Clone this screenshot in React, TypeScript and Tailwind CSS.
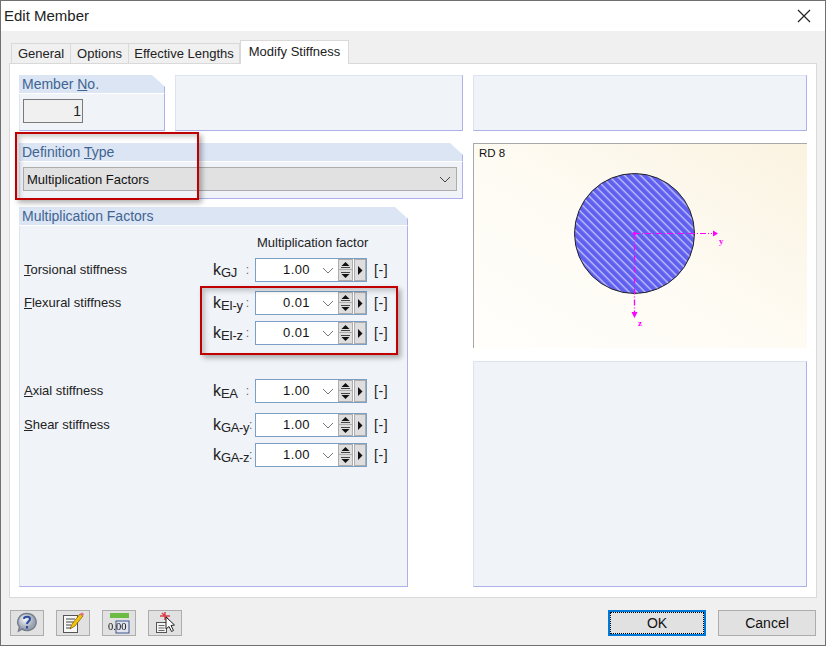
import React from "react";

function Panel({ title, className, children }: { title?: React.ReactNode; className: string; children?: React.ReactNode }) {
  return (
    <div className={`flex flex-col ${className}`}>
      {title && (
        <div className="h-[19px] shrink-0 border-b border-b-white border-r border-r-[#adb0ea] bg-[#dbe5f4] pl-[3px] text-[14px] leading-[18px] text-[#3f6491] [clip-path:polygon(0_0,calc(100%-13px)_0,100%_12px,100%_100%,0_100%)]">
          {title}
        </div>
      )}
      <div className={`min-h-0 flex-1 border-b border-l border-r border-b-[#adb0ea] border-l-[#dde4f1] border-r-[#adb0ea] bg-[#f0f3f8] ${title ? "" : "border-t border-t-[#dde4f1]"}`}>
        {children}
      </div>
    </div>
  );
}

function Tri({ down }: { down?: boolean }) {
  return (
    <svg width="9" height="6" viewBox="0 0 9 6" className="block">
      {down ? (
        <>
          <rect x="0" y="0" width="9" height="1" fill="#444" />
          <path d="M0.500 2h8L4.500 6z" fill="#111" />
        </>
      ) : (
        <>
          <path d="M4.500 0l4 4h-8z" fill="#111" />
          <rect x="0" y="5" width="9" height="1" fill="#444" />
        </>
      )}
    </svg>
  );
}

function Field({ value }: { value: string }) {
  return (
    <div className="flex h-6 w-[112px] items-stretch border border-[#7c9dc4] bg-white">
      <div className="flex w-[81px] items-center justify-end">
        <span className="text-[13px] tracking-[0.4px] text-[#111]">{value}</span>
        <svg width="12" height="7" viewBox="0 0 12 7" className="ml-[12px] mr-[3px]">
          <path d="M1 1l5 5 5-5" fill="none" stroke="#777" strokeWidth="1" />
        </svg>
      </div>
      <div className="ml-[1px] flex w-[15px] flex-col">
        <div className="flex h-[11px] items-center justify-center border border-[#adadad] bg-[#dedede]"><Tri /></div>
        <div className="flex h-[11px] items-center justify-center border border-t-0 border-[#adadad] bg-[#dedede]"><Tri down /></div>
      </div>
      <div className="ml-[1px] flex h-[22px] w-[12px] items-center justify-center border border-[#adadad] bg-[#dedede]">
        <svg width="6" height="9" viewBox="0 0 6 9"><path d="M1 0l4.500 4.500L1 9z" fill="#111" /></svg>
      </div>
    </div>
  );
}

function Row({ label, sub, value, mt }: { label?: React.ReactNode; sub: string; value: string; mt: string }) {
  return (
    <div className={`flex h-6 items-center ${mt}`}>
      <div className="w-[193px] pl-[4px] text-[13px] text-[#222]">{label}</div>
      <div className="flex w-[42px] items-center whitespace-nowrap text-[#222]">
        <span className="text-[16px] leading-none">k</span>
        <span className="relative top-[2px] text-[13px] leading-none tracking-[-0.4px]">{sub}</span>
        <span className="ml-auto mr-[6px] text-[12px] text-[#666]">:</span>
      </div>
      <Field value={value} />
      <span className="ml-[7px] text-[14px] tracking-[0.6px] text-[#222]">[-]</span>
    </div>
  );
}

function Toolbtn({ children }: { children: React.ReactNode }) {
  return (
    <div className="flex h-[26px] w-[34px] items-center justify-center border border-[#adadad] bg-[#e1e1e1]">{children}</div>
  );
}

export default function App() {
  return (
    <div className="relative flex h-[646px] w-[826px] flex-col overflow-hidden border border-[#707070] bg-[#f0f0f0] text-[13px] [font-family:'Liberation_Sans',Arial,sans-serif]">
      <div className="flex h-[30px] shrink-0 items-center justify-between bg-white pl-[3px] pr-[14px]">
        <span className="text-[15px] text-[#222]">Edit Member</span>
        <svg width="14" height="14" viewBox="0 0 14 14"><path d="M1 1l12 12M13 1L1 13" stroke="#222" strokeWidth="1.2" /></svg>
      </div>

      <div className="flex h-[32px] shrink-0 items-end pl-[10px] text-[#222]">
        <div className="flex h-[20px] w-[60px] items-center justify-center border border-b-0 border-[#d9d9d9] bg-[#f0f0f0]">General</div>
        <div className="flex h-[20px] w-[58px] items-center justify-center border border-b-0 border-l-0 border-[#d9d9d9] bg-[#f0f0f0]">Options</div>
        <div className="flex h-[20px] w-[111px] items-center justify-center border border-b-0 border-l-0 border-[#d9d9d9] bg-[#f0f0f0]">Effective Lengths</div>
        <div className="z-10 -mb-px flex h-[24px] w-[109px] items-start justify-center border border-b-0 border-[#d9d9d9] bg-white pt-[1px]">Modify Stiffness</div>
      </div>

      <div className="mx-[8px] flex h-[535px] shrink-0 gap-[10px] border border-[#d9d9d9] bg-white pl-[9px] pr-[7px] pt-[11px]">
        <div className="flex w-[444px] shrink-0 flex-col">
          <div className="flex h-[56px] gap-[10px]">
            <Panel className="w-[146px]" title={<>Member <u>N</u>o.</>}>
              <div className="ml-[3px] mt-[5px] flex h-[24px] w-[60px] items-center justify-end border border-[#7a7a7a] bg-[#f0f0f0] pr-[1px] pt-[1px] text-[14px] text-[#222]">1</div>
            </Panel>
            <Panel className="w-[288px]" />
          </div>
          <Panel className="mt-[12px] h-[56px]" title={<>Definition <u>T</u>ype</>}>
            <div className="ml-[3px] mt-[5px] flex h-[24px] w-[434px] items-center justify-between border border-[#adadad] bg-[#e1e1e1] pl-[3px] pr-[5px] pt-[1px] text-[#111]">
              <span>Multiplication Factors</span>
              <svg width="12" height="7" viewBox="0 0 12 7"><path d="M1 1l5 5 5-5" fill="none" stroke="#444" /></svg>
            </div>
          </Panel>
          <Panel className="mt-[8px] h-[380px] w-[389px]" title="Multiplication Factors">
            <div className="flex h-full flex-col">
              <div className="mt-[8px] h-[17px] pl-[237px] text-[13px] leading-[17px] text-[#222]">Multiplication factor</div>
              <Row mt="mt-[7px]" label={<><u>T</u>orsional stiffness</>} sub="GJ" value="1.00" />
              <Row mt="mt-[9px]" label={<><u>F</u>lexural stiffness</>} sub="EI-y" value="0.01" />
              <Row mt="mt-[6px]" sub="EI-z" value="0.01" />
              <Row mt="mt-[34px]" label={<><u>A</u>xial stiffness</>} sub="EA" value="1.00" />
              <Row mt="mt-[10px]" label={<><u>S</u>hear stiffness</>} sub="GA-y" value="1.00" />
              <Row mt="mt-[6px]" sub="GA-z" value="1.00" />
            </div>
          </Panel>
        </div>

        <div className="flex w-[334px] shrink-0 flex-col">
          <Panel className="h-[56px]" />
          <div className="relative mt-[12px] h-[205px] border-l border-t border-[#a8a8a8] bg-gradient-to-tr from-[#fffefb] via-[#fefbf3] to-[#fbf3e1]">
            <span className="absolute left-[5px] top-[1px] text-[11.500px] text-[#111]">RD 8</span>
            <svg width="333" height="204" viewBox="0 0 333 204" className="block">
              <defs>
                <pattern id="h" width="5.660" height="5.660" patternUnits="userSpaceOnUse" patternTransform="rotate(45)">
                  <rect width="5.660" height="5.660" fill="#6060f0" />
                  <rect width="5.660" height="1.300" fill="#c6c6fa" />
                </pattern>
              </defs>
              <circle cx="160.500" cy="89.500" r="60" fill="url(#h)" stroke="#222" strokeWidth="1" />
              <g stroke="#ff00ff" fill="none">
                <path d="M160 89.500H238" strokeWidth="1.200" strokeDasharray="6 2 1 2" />
                <path d="M160.500 89.500V168" strokeWidth="1.300" strokeDasharray="6 2 1 2" />
              </g>
              <circle cx="160.500" cy="89.500" r="1.800" fill="#ff00ff" />
              <path d="M239 86.500l5 3-5 3zM157.500 168h6l-3 6z" fill="#ff00ff" />
              <text x="245" y="100" fontSize="9" fontWeight="700" fill="#ff00ff" fontFamily="'Liberation Serif', serif">y</text>
              <text x="164" y="182" fontSize="9" fontWeight="700" fill="#ff00ff" fontFamily="'Liberation Serif', serif">z</text>
            </svg>
          </div>
          <Panel className="mt-[13px] h-[226px]" />
        </div>
      </div>

      <div className="flex flex-1 items-start px-[9px] pt-[12px]">
        <div className="flex gap-[12px]">
          <Toolbtn>
            <svg width="24" height="22" viewBox="0 0 24 22" className="blur-[0.4px]">
              <defs><radialGradient id="q" cx="40%" cy="35%"><stop offset="0" stopColor="#f4f6fa" /><stop offset="1" stopColor="#9aa3b3" /></radialGradient></defs>
              <path d="M12 1.500a9 8.500 0 1 1-5 15.500l-3.500 2 1-4A9 8.500 0 0 1 12 1.500z" fill="url(#q)" stroke="#777f8c" strokeWidth="1.500" />
              <path d="M9 7c0-3 6-3 6 0 0 2.500-3 2.500-3 5M12 14v2.500" fill="none" stroke="#2d4b9e" strokeWidth="2" />
            </svg>
          </Toolbtn>
          <Toolbtn>
            <svg width="24" height="22" viewBox="0 0 24 22" className="blur-[0.3px]">
              <rect x="2.500" y="3.500" width="14" height="17" fill="#f8f8f8" stroke="#555" />
              <path d="M5 7h9M5 10h8M5 13h5M5 16h5" stroke="#444" />
              <path d="M9 17l2-5 8-10 3 2-8 10z" fill="#f4c20d" stroke="#7a5c00" strokeWidth=".7" />
              <path d="M19 2l3 2 1-2-2-1.500z" fill="#e86a8a" />
            </svg>
          </Toolbtn>
          <Toolbtn>
            <svg width="24" height="22" viewBox="0 0 24 22" className="blur-[0.3px]">
              <rect x="3" y="1" width="19" height="5" fill="#6cbb45" />
              <rect x="9" y="9" width="13" height="12" fill="#dfe4ef" stroke="#41558c" />
              <text x="1" y="17.500" fontSize="10.500" fill="#111" fontFamily="'Liberation Serif', serif">0.00</text>
            </svg>
          </Toolbtn>
          <Toolbtn>
            <svg width="24" height="22" viewBox="0 0 24 22" className="blur-[0.3px]">
              <rect x="3.500" y="10.500" width="10" height="10" fill="#f4f4f4" stroke="#555" />
              <path d="M5.500 13.500h6M5.500 16h6M5.500 18.500h6" stroke="#666" />
              <path d="M7 4h10M12 0v8M9 1l6 6" stroke="#d8404a" strokeWidth="1.500" />
              <path d="M13 5l8.500 8-3.500.5 2.500 5-2 1-2.500-5-3 2.500z" fill="#fff" stroke="#222" />
            </svg>
          </Toolbtn>
        </div>
        <div className="ml-auto flex gap-[12px] text-[14px] text-[#111]">
          <div className="flex h-[26px] w-[98px] items-center justify-center border-2 border-[#0078d7] bg-[#e1e1e1] outline-1 -outline-offset-3 outline-dotted outline-black">OK</div>
          <div className="flex h-[26px] w-[98px] items-center justify-center border border-[#adadad] bg-[#e1e1e1]">Cancel</div>
        </div>
      </div>

      <div className="pointer-events-none absolute left-[14px] top-[131px] h-[68px] w-[184px] border-2 border-[#c00000] shadow-[3px_3px_5px_rgba(0,0,0,0.3),inset_3px_3px_5px_rgba(0,0,0,0.2)]" />
      <div className="pointer-events-none absolute left-[199px] top-[285px] h-[69px] w-[198px] border-2 border-[#c00000] shadow-[3px_3px_5px_rgba(0,0,0,0.3),inset_3px_3px_5px_rgba(0,0,0,0.2)]" />
    </div>
  );
}
